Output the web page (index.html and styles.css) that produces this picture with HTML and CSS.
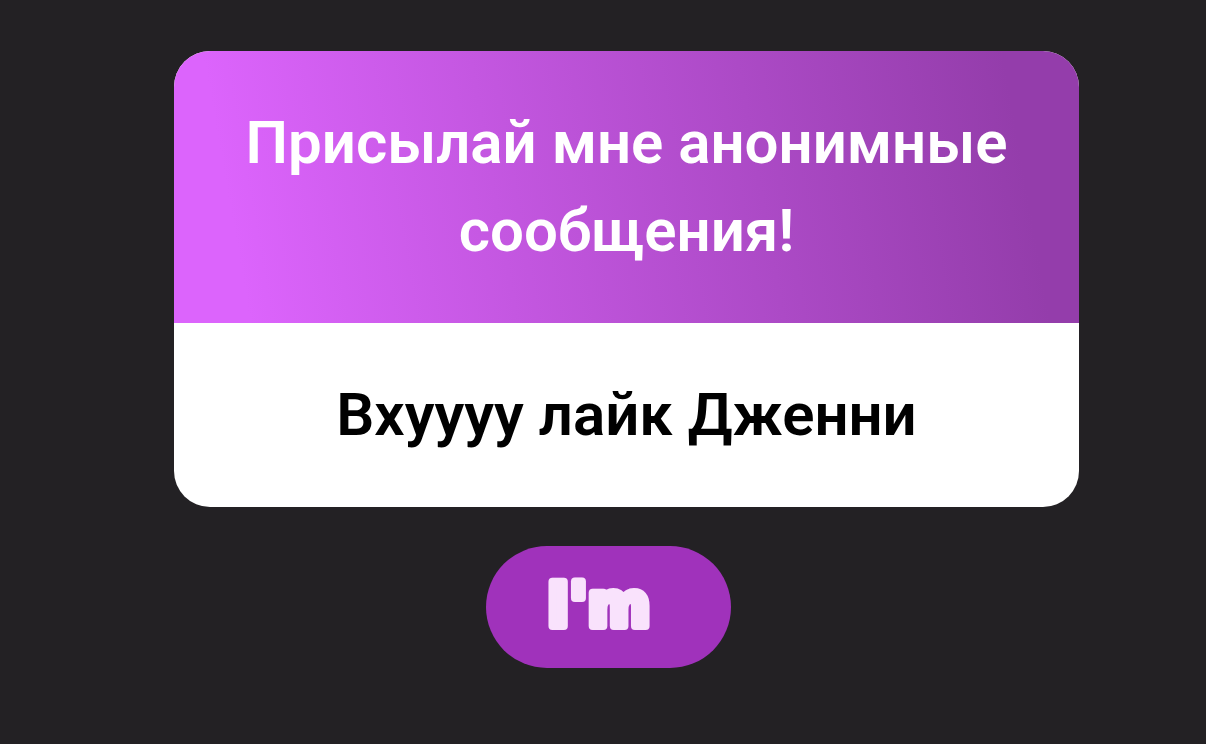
FILE: index.html
```html
<!DOCTYPE html>
<html lang="ru">
<head>
  <meta charset="UTF-8" />
  <meta name="viewport" content="width=device-width, initial-scale=1.0"/>
  <title>Присылай мне анонимные сообщения!</title>
  <link rel="stylesheet" href="styles.css">
</head>
<body>
  <main class="page">
    <section class="card">
      <h1 class="card-title">Присылай мне анонимные сообщения!</h1>
      <p class="card-message">Вхуууу лайк Дженни</p>
    </section>

    <button type="button" class="name-btn">
      <svg class="name-text" viewBox="0 0 120 72" width="120" height="72">
        <text x="5" y="55">I'm</text>
      </svg>
    </button>
  </main>
</body>
</html>
```

FILE: styles.css
```css
* {
  margin: 0;
  padding: 0;
  box-sizing: border-box;
}

body {
  background: #232124;
  font-family: Roboto, sans-serif;
}

.page {
  display: flex;
  flex-direction: column;
  align-items: center;
  gap: 39px;
  padding: 51px 127px 76px 174px;
}

.card {
  width: 100%;
  border-radius: 36px;
  overflow: hidden;
  background: #fff;
  text-align: center;
}

.card-title,
.card-message {
  padding: 48px;
  font-size: 60px;
  font-weight: 600;
  line-height: 88px;
}

.card-title {
  color: #fff;
  background: linear-gradient(80deg, #dc64fc 8%, #943dab 92%);
}

.card-message {
  color: #000;
}

.name-btn {
  display: flex;
  align-items: center;
  padding: 25px 69px 25px 56px;
  margin-right: 36px;
  border: none;
  border-radius: 61px;
  background: #a032bb;
  cursor: pointer;
}

.name-text {
  display: block;
}

/* rounded thick outline makes the letters look like bubbles */
.name-text text {
  font-family: "DejaVu Sans", sans-serif;
  font-weight: 700;
  font-size: 60px;
  fill: #f9e2fc;
  stroke: #f9e2fc;
  stroke-width: 8px;
  stroke-linejoin: round;
}
```
